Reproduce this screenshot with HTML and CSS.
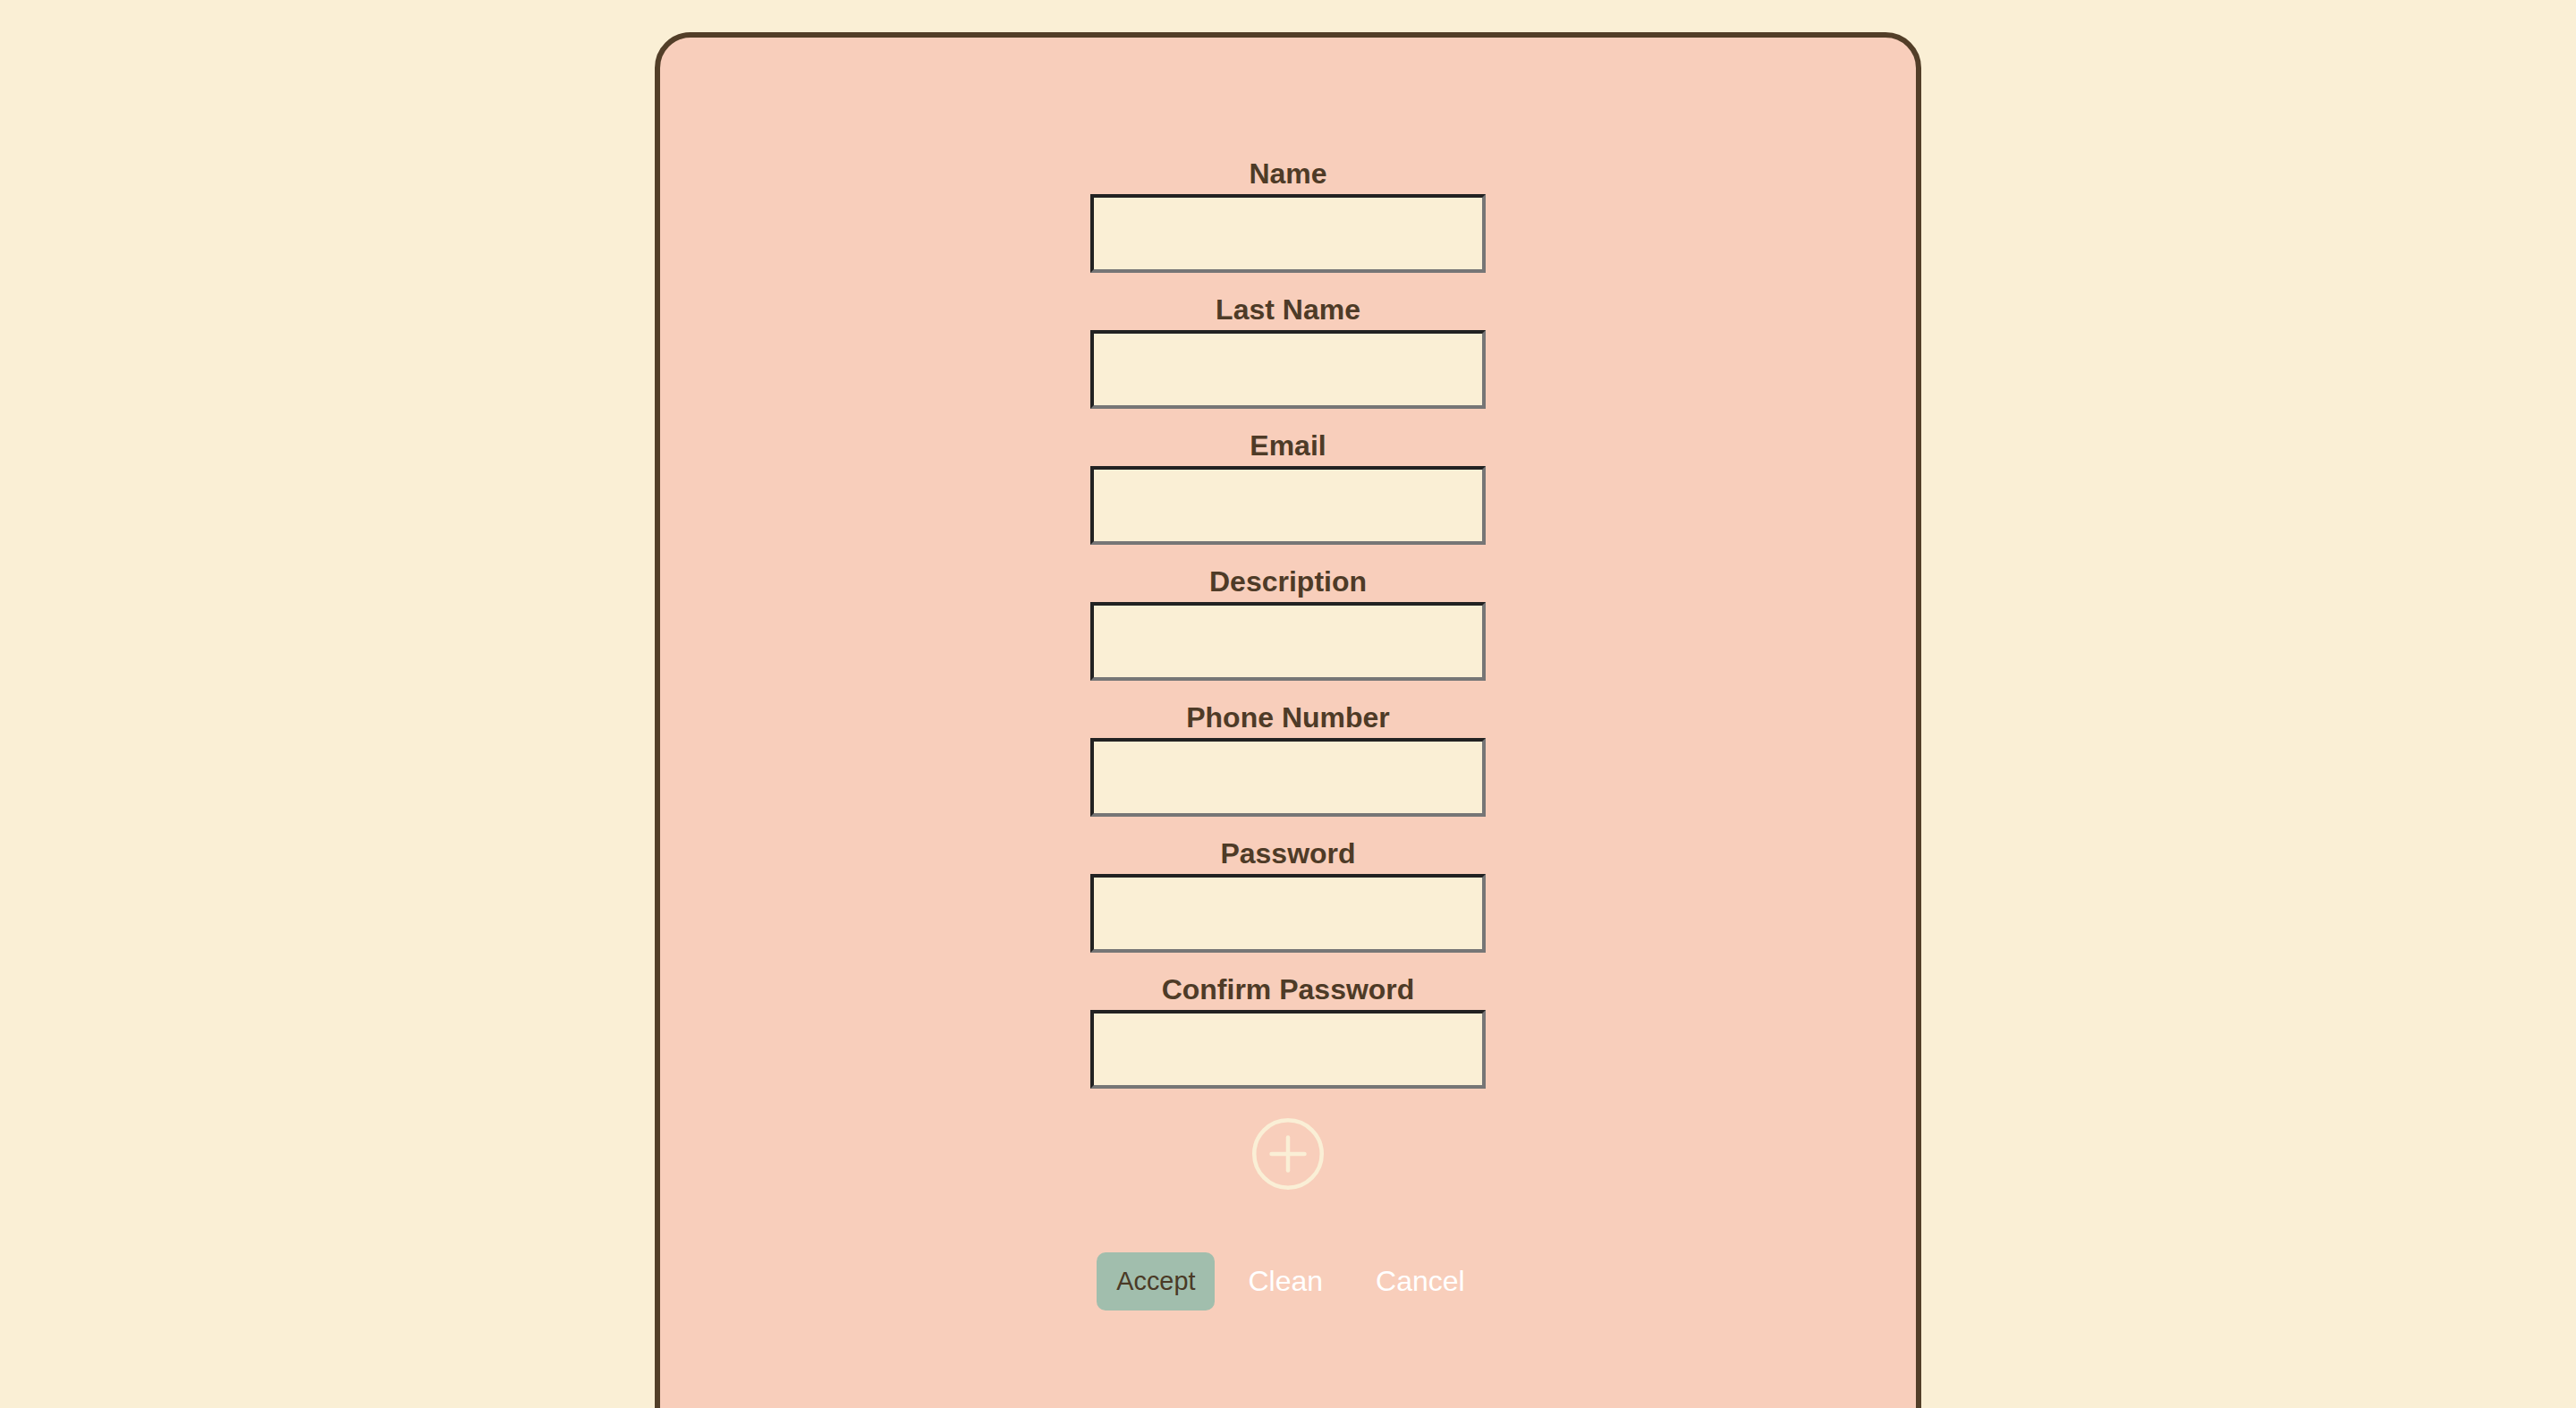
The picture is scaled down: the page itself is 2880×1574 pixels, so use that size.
FILE: index.html
```html
<!DOCTYPE html>
<html lang="en">
<head>
<meta charset="utf-8">
<title>Form</title>
<link rel="stylesheet" href="styles.css">
</head>
<body>
<main class="card">
  <form class="form">
    <div class="field">
      <label class="label" for="name">Name</label>
      <input class="input" id="name" type="text">
    </div>
    <div class="field">
      <label class="label" for="lastname">Last Name</label>
      <input class="input" id="lastname" type="text">
    </div>
    <div class="field">
      <label class="label" for="email">Email</label>
      <input class="input" id="email" type="text">
    </div>
    <div class="field">
      <label class="label" for="desc">Description</label>
      <input class="input" id="desc" type="text">
    </div>
    <div class="field">
      <label class="label" for="phone">Phone Number</label>
      <input class="input" id="phone" type="text">
    </div>
    <div class="field">
      <label class="label" for="pass">Password</label>
      <input class="input" id="pass" type="password">
    </div>
    <div class="field">
      <label class="label" for="pass2">Confirm Password</label>
      <input class="input" id="pass2" type="password">
    </div>
    <button class="add" type="button" aria-label="Add">
      <svg width="80" height="80" viewBox="0 0 80 80" fill="none" stroke="#faefd6" stroke-width="4.5" stroke-linecap="round">
        <circle cx="40" cy="40" r="37.75"/>
        <line x1="21.5" y1="40" x2="58.5" y2="40"/>
        <line x1="40" y1="21.5" x2="40" y2="58.5"/>
      </svg>
    </button>
    <div class="actions">
      <button class="btn btn-accept" type="button">Accept</button>
      <button class="btn btn-link" type="button">Clean</button>
      <button class="btn btn-link" type="button">Cancel</button>
    </div>
  </form>
</main>
</body>
</html>
```

FILE: styles.css
```css
html, body {
  margin: 0;
  padding: 0;
  background: #faefd5;
  font-family: "Liberation Sans", Arial, sans-serif;
  overflow: hidden;
  height: 1574px;
}

body {
  padding-top: 36px;
  box-sizing: border-box;
}

.card {
  width: 1416px;
  height: 1700px;
  margin: 0 auto;
  box-sizing: border-box;
  background: #f8cebb;
  border: 6px solid #523e28;
  border-radius: 40px;
  padding-top: 134px;
}

.form {
  display: flex;
  flex-direction: column;
  align-items: center;
  gap: 23px;
}

.field {
  display: flex;
  flex-direction: column;
  align-items: center;
}

.label {
  font-size: 32px;
  line-height: 37px;
  font-weight: 700;
  color: #4e3b27;
  margin-bottom: 4px;
}

.input {
  display: block;
  width: 442px;
  height: 88px;
  box-sizing: border-box;
  margin: 0;
  padding: 0 8px;
  background: #faefd5;
  border-style: solid;
  border-width: 4px;
  border-color: #222222 #767676 #767676 #222222;
  border-radius: 0;
  outline: none;
  font-family: "Liberation Sans", Arial, sans-serif;
  font-size: 28px;
}

.add {
  margin-top: 10px;
  padding: 0;
  border: 0;
  background: transparent;
  width: 80px;
  height: 80px;
  display: block;
  cursor: pointer;
}

.add svg {
  display: block;
}

.actions {
  margin-top: 47px;
  display: flex;
  align-items: center;
  gap: 15px;
  transform: translateX(3px);
}

.btn {
  border: 0;
  background: transparent;
  font-family: "Liberation Sans", Arial, sans-serif;
  cursor: pointer;
  margin: 0;
}

.btn-accept {
  background: #a1bead;
  color: #4a3a26;
  font-size: 28.8px;
  line-height: 33px;
  padding: 16px 22px;
  border-radius: 10px;
}

.btn-link {
  color: #ffffff;
  font-size: 32px;
  line-height: 37px;
  padding: 0 22px;
}
```
